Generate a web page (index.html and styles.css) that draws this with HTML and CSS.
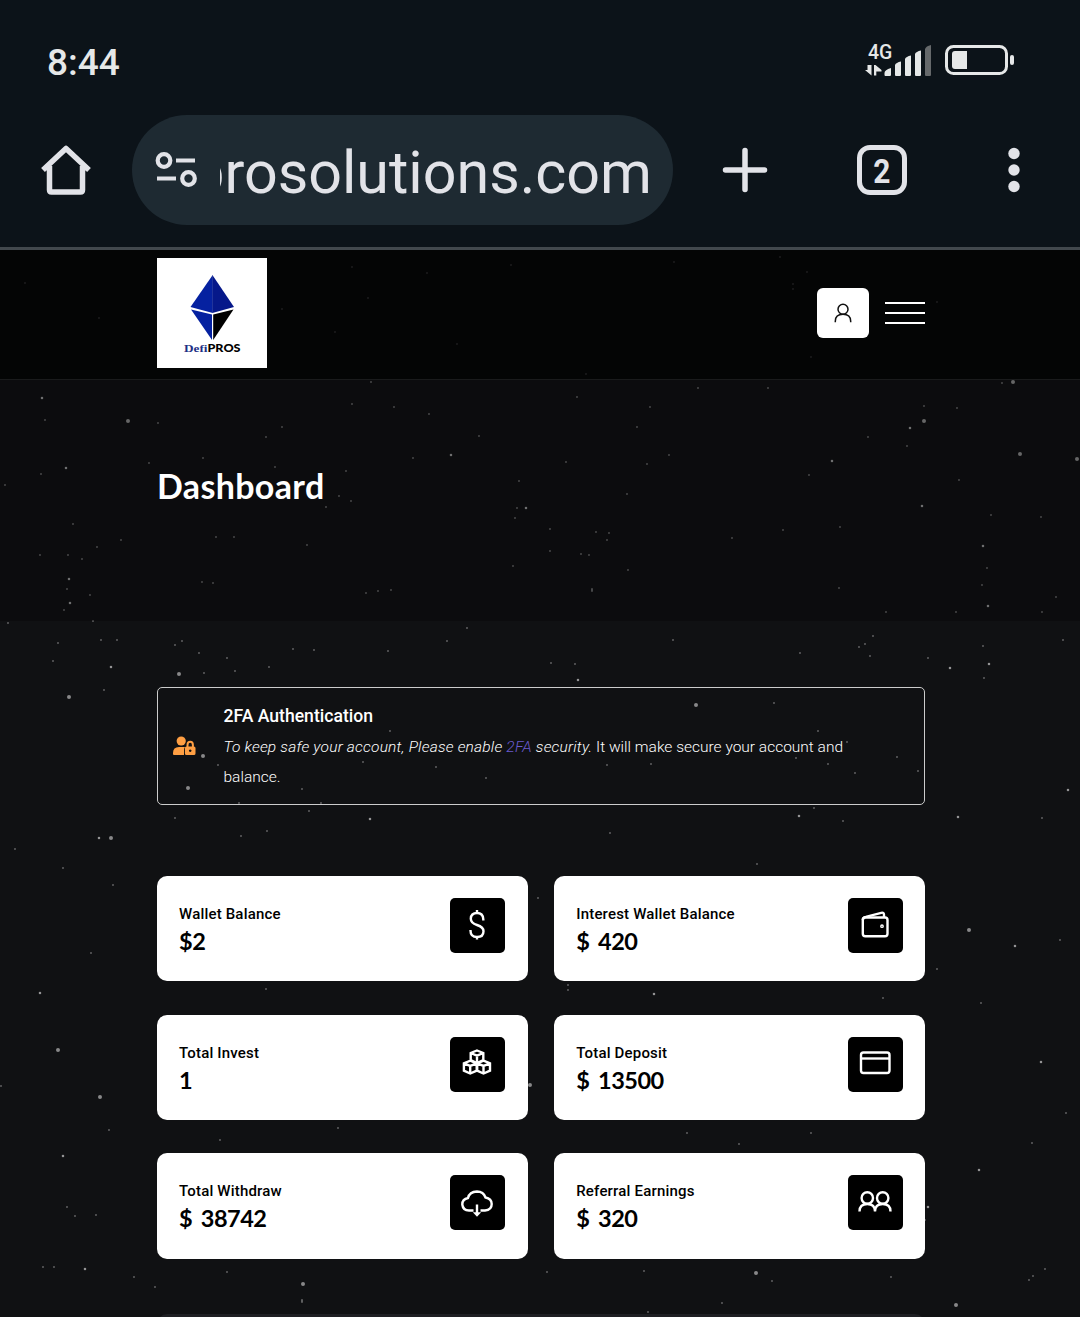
FILE: index.html
```html
<!DOCTYPE html>
<html lang="en">
<head>
<meta charset="utf-8">
<title>Dashboard</title>
<link rel="stylesheet" href="styles.css">
</head>
<body>
<div class="chrome">
  <div class="status">
    <span class="clock">8:44</span>
    <svg class="indicators" width="152" height="38" viewBox="0 0 152 38">
      <text x="5" y="18.500" class="net">4G</text>
      <path class="lit" d="M8.500 25v10.500L2 30h2.500v-5zM11 25v10.500h2.300v-4H18.500V30L12.500 25zM21.500 35v-2q0-3 6.500-5v7q0 1-1 1h-4.500q-1 0-1-1zM32 35V25q1-2.500 6-3.500V35q0 1-1 1h-4q-1 0-1-1zM42 35V19q1-2.500 6-3.500V35q0 1-1 1h-4q-1 0-1-1zM52 35V14q1-2.500 6-3.500V35q0 1-1 1h-4q-1 0-1-1z"/>
      <path class="dim" d="M62 35V9q1-3 6-4v30q0 1-1 1h-4q-1 0-1-1z"/>
      <rect x="83.500" y="6.500" width="60" height="27" rx="7" class="cell"/>
      <path class="lit" d="M92 11h12v18H92q-3 0-3-3V14q0-3 3-3z"/>
      <rect x="147" y="15" width="4" height="10" rx="2" class="lit"/>
    </svg>
  </div>
  <div class="toolbar">
    <svg class="home" width="52" height="52" viewBox="0 0 52 52"><path d="M3 26 26 4.500 49 26M9.500 22v24q0 2 2 2h29q2 0 2-2V22"/></svg>
    <div class="omnibox">
      <svg class="tune" width="42" height="36" viewBox="0 0 42 36"><circle cx="9" cy="8.500" r="6.300"/><circle cx="33.500" cy="26.500" r="6.300"/><path d="M21 8.500h19M2 26.500h19"/></svg>
      <div class="url"><span>prosolutions.com</span></div>
    </div>
    <svg class="plus" width="44" height="44" viewBox="0 0 44 44"><path d="M22 2.500v39M2.500 22h39"/></svg>
    <div class="tabs"><span>2</span></div>
    <svg class="more" width="12" height="46" viewBox="0 0 12 46"><circle cx="6" cy="6.500" r="5.700"/><circle cx="6" cy="23" r="5.700"/><circle cx="6" cy="39.500" r="5.700"/></svg>
  </div>
</div>
<div class="site">
  <svg class="stars" width="1080" height="1067" viewBox="0 250 1080 1067">
    <path class="s1" d="M45 420h0M158 423h0M371 382h0M352 404h0M394 407h0M429 414h0M282 427h0M266 437h0M479 436h0M413 458h0M203 458h0M149 463h0M41 474h0M5 485h0M275 467h0M346 471h0M519 481h0M339 496h0M351 501h0M326 507h0M517 508h0M515 518h0M73 524h0M216 537h0M234 537h0M121 540h0M307 545h0M97 547h0M40 555h0M68 555h0M82 559h0M513 566h0M67 589h0M202 582h0M213 583h0M90 595h0M64 610h0M366 593h0M378 591h0M391 590h0M93 621h0M8 623h0M467 628h0M101 640h0M117 640h0M58 643h0M182 641h0M175 645h0M199 653h0M227 658h0M293 649h0M314 650h0M388 651h0M447 641h0M53 661h0M204 673h0M235 671h0M269 667h0M698 388h0M768 388h0M577 397h0M650 407h0M637 427h0M669 455h0M647 464h0M566 462h0M627 494h0M550 529h0M550 551h0M596 532h0M609 533h0M607 540h0M581 554h0M589 555h0M628 570h0M592 589v2M1002 383h0M924 406h0M957 408h0M868 437h0M907 446h0M809 475h0M959 480h0M991 515h0M1041 517h0M840 527h0M783 530h0M732 538h0M987 568h0M982 585h0M839 588h0M1056 597h0M1042 612h0M956 612h0M886 612h0M673 640h0M873 636h0M865 644h0M859 647h0M870 656h0M800 653h0M928 658h0M983 646h0M1063 640h0M984 678h0M551 663h0M575 664h0M302 789h0M218 765h0M390 731h0M363 762h0M436 767h0M486 778h0M239 803h0M321 803h0M309 811h0M774 703h0M818 731h0M847 742h0M796 758h0M828 764h0M855 773h0M897 757h0M918 771h0M607 765h0M651 764h0M814 808h0M104 690h0M15 849h0M843 821h0M610 833h0M757 864h0M267 831h0M241 836h0M175 818h0M1042 818h0M1060 940h0M91 953h0M109 1130h0M1 1086h0M568 985h0M568 990h0M883 998h0M981 1003h0M1032 1143h0M1066 1113h0M302 1300v2M925 1220h0M547 1272h0M644 1271h0M772 1281h0M891 1277h0M722 1303h0M648 1312h0M43 1267h0M54 1267h0M134 1277h0M155 1287h0M227 1272h0M1033 1276h0M1045 1269h0M1029 1280h0M67 1207h0M75 1216h0M96 1215h0M266 989h0M338 1128h0M220 1140h0M739 1144h0M538 898h0M937 969h0M113 885h0M63 868h0M282 309h0M352 267h0M368 298h0M335 332h0M807 272h0M793 284h0M793 289h0M937 302h0M811 357h0M780 257h0M674 262h0M99 318h0M25 283h0M457 344h0M586 374h0M427 273h0M511 265h0M687 1133h0M811 1133h0"/>
    <path class="s2" d="M42 398h0M451 455h0M66 468h0M526 508h0M69 579h0M70 603h0M111 667h0M910 428h0M832 461h0M922 506h0M983 546h0M988 606h0M950 668h0M989 664h0M578 680h0M1068 790h0M370 819h0M99 838h0M799 816h0M958 817h0M1015 946h0M40 993h0M63 1156h0M654 994h0M1041 1062h0M979 1170h0M928 1207h0M85 1269h0"/>
    <path class="s3" d="M128 421h0M179 674h0M1013 382h0M924 421h0M1020 454h0M1077 459h0M203 756h0M188 788h0M696 705h0M69 697h0M111 838h0M969 930h0M58 1050h0M100 1097h0M530 1085h0M303 1284h0M756 1273h0M956 1305h0"/>
  </svg>
  <header class="header">
    <div class="logo">
      <svg width="110" height="110" viewBox="0 0 110 110">
        <path fill="#0521a0" d="M55.700 17v38L33.500 49z"/><path fill="#06188a" d="M55.400 17v38L77 49z"/>
        <path fill="#0521a0" d="M34 51.500 55 56.500V82z"/><path fill="#000" d="M76.500 51.500 56.200 56.500V82z"/>
        <text x="27" y="94" class="defi" textLength="23.500" lengthAdjust="spacingAndGlyphs">Defi</text>
        <text x="50.500" y="94" class="pros" textLength="33" lengthAdjust="spacingAndGlyphs">PROS</text>
      </svg>
    </div>
    <div class="actions">
      <div class="user"><svg width="20" height="20" viewBox="0 0 20 20"><circle cx="10" cy="6.200" r="5"/><path d="M2.300 19.200v-1q0-7 7.700-7t7.700 7v1"/></svg></div>
      <div class="burger"><i></i><i></i><i></i></div>
    </div>
  </header>
  <section class="hero"><h1>Dashboard</h1></section>
  <main class="main">
    <div class="alert">
      <svg class="lock" width="24" height="20" viewBox="0 0 24 20"><circle cx="8.200" cy="5" r="4.600"/><path d="M1 19q-1 0-1-1v-1q0-6 6-6h6q-1 1-1 3v5z"/><path fill-rule="evenodd" d="M13.500 10.500V9q0-4.200 3.700-4.200T20.900 9v1.500q1.600 0 1.600 1.600v5.300q0 1.600-1.600 1.600h-7.400q-1.600 0-1.600-1.600v-5.300q0-1.600 1.600-1.600zm2 0h3.400V9q0-2.200-1.700-2.200T15.500 9zm1.700 2.900a1.300 1.300 0 1 0 .01 0z"/></svg>
      <div class="copy">
        <h2>2FA Authentication</h2>
        <p><em>To keep safe your account, Please enable <a>2FA</a> security.</em> It will make secure your account and balance.</p>
      </div>
    </div>
    <div class="grid">
      <div class="card"><div><div class="label">Wallet Balance</div><div class="value">$2</div></div>
        <div class="icon"><svg width="36" height="36" viewBox="0 0 36 36"><path d="M24.300 13.500v-1.300Q24 6 18 6t-6.200 5.700c0 4 2.800 5.200 6.200 6.300 3.500 1.100 6.500 2.300 6.500 6.200Q24.500 30 18 30t-6.500-6.500V23M18 3v3M18 30v2.500"/></svg></div></div>
      <div class="card"><div><div class="label">Interest Wallet Balance</div><div class="value">$ 420</div></div>
        <div class="icon"><svg width="36" height="36" viewBox="0 0 36 36"><rect x="5.800" y="10.500" width="24.700" height="18.700" rx="2.500"/><path d="M5.800 13q0-2.500 3-3.200l15.500-4q2.700-.7 2.700 2v2.700"/><circle cx="25" cy="19.200" r=".7"/></svg></div></div>
      <div class="card"><div><div class="label">Total Invest</div><div class="value">1</div></div>
        <div class="icon"><svg width="36" height="36" viewBox="0 0 36 36"><path d="M18 5.500 24.300 8v7.200L18 18l-6.300-2.800V8zM11.700 8l6.300 2.700L24.300 8M18 10.700V18M11.200 15.700l6.500 2.600v7.400l-6.500 2.800-6.300-2.800v-7.400zM4.900 18.300l6.300 2.600 6.500-2.600M11.200 21v7.500M24.500 15.700l6.500 2.600v7.400l-6.500 2.800-6.300-2.800v-7.400zM18.200 18.300l6.300 2.600 6.500-2.600M24.500 21v7.500"/></svg></div></div>
      <div class="card"><div><div class="label">Total Deposit</div><div class="value">$ 13500</div></div>
        <div class="icon"><svg width="36" height="36" viewBox="0 0 36 36"><rect x="4" y="7.500" width="28.500" height="20.500" rx="2.500"/><path d="M4 13.500h28.500"/></svg></div></div>
      <div class="card"><div><div class="label">Total Withdraw</div><div class="value">$ 38742</div></div>
        <div class="icon"><svg width="36" height="36" viewBox="0 0 36 36"><path d="M14.500 26.500H10Q4 26.500 3.300 20.500 3.300 15 9 14q1.500-6.300 9-6.500 6.500 0 8.500 6 6 1 6.200 6.500 0 6-6.700 6.500h-4.500M18 20.500v9"/><path class="solid" d="M13.800 28.300h8.400L18 32.700z"/></svg></div></div>
      <div class="card"><div><div class="label">Referral Earnings</div><div class="value">$ 320</div></div>
        <div class="icon"><svg width="36" height="36" viewBox="0 0 36 36"><circle cx="10.300" cy="14" r="5.700"/><circle cx="25.700" cy="14" r="5.700"/><path d="M2.500 27.500q0-7.500 7.800-7.500 7.700 0 7.700 7.500 0-7.500 7.700-7.500 7.800 0 7.800 7.500"/></svg></div></div>
    </div>
    <div class="panel"></div>
  </main>
</div>
</body>
</html>
```

FILE: styles.css
```css
* { box-sizing: border-box; }
body { margin: 0; width: 1080px; height: 1317px; overflow: hidden; background: #101113; font-family: Roboto, sans-serif; color: #fff; }
svg { display: block; overflow: visible; }
h1, h2, p { margin: 0; }

.chrome { height: 250px; background: #0c1319; border-bottom: 3px solid #42484d; }
.status { height: 115px; padding: 39px 65px 0 47px; display: flex; justify-content: space-between; }
.clock { font-size: 37px; line-height: 48px; font-weight: 500; color: #e6e8e8; }
.indicators { margin-top: 1px; }
.net { font: 500 19.500px Roboto, sans-serif; fill: #e6e8e8; }
.lit { fill: #e6e8e8; }
.dim { fill: #66696b; }
.cell { fill: none; stroke: #e6e8e8; stroke-width: 3; }

.toolbar { height: 110px; display: flex; align-items: center; padding-left: 40px; color: #e2e3e8; }
.toolbar svg { fill: none; stroke: #e2e3e8; stroke-width: 5.5; flex: none; }
.toolbar .home { stroke-linejoin: round; }
.omnibox { margin-left: 40px; width: 541px; height: 110px; border-radius: 55px; background: #1e2a32; display: flex; align-items: center; padding-left: 23px; }
.toolbar .tune { stroke-width: 4.200; }
.url { margin-left: 23px; width: 432px; height: 80px; overflow: hidden; display: flex; justify-content: flex-end; font-size: 59.200px; line-height: 86px; white-space: nowrap; }
.toolbar .plus { margin-left: 50px; stroke-linecap: round; }
.tabs { margin-left: 90px; width: 50px; height: 50px; border: 5.500px solid #e2e3e8; border-radius: 13px; font: 700 34px/42px Roboto, sans-serif; text-align: center; }
.tabs span { display: inline-block; transform: scaleX(.88); }
.toolbar .more { margin-left: 101px; fill: #e2e3e8; stroke: none; }

.site { position: relative; height: 1067px; }
.stars { position: absolute; top: 0; left: 0; z-index: -1; fill: none; stroke-linecap: round; stroke: #fff; }
.s1 { stroke-width: 2; opacity: .33; }
.s2 { stroke-width: 2.600; opacity: .55; }
.s3 { stroke-width: 4; opacity: .5; }

.header { height: 130px; background: rgba(0, 0, 0, .7); border-bottom: 1px solid #1a1b1c; padding: 8px 155px 0 157px; display: flex; justify-content: space-between; }
.logo { width: 110px; height: 110px; background: #fff; }
.defi { font: bold 11px "Liberation Serif", serif; fill: #1d2f86; }
.pros { font: 900 12px Lato, sans-serif; fill: #000; }
.actions { display: flex; gap: 16px; padding-top: 30px; }
.user { width: 52px; height: 50px; border-radius: 6px; background: #fff; display: flex; align-items: center; justify-content: center; }
.user svg { fill: none; stroke: #111; stroke-width: 1.500; }
.burger { width: 40px; height: 50px; display: flex; flex-direction: column; justify-content: center; gap: 8px; }
.burger i { height: 2px; background: #fff; }

.hero { height: 241px; background: rgba(0, 0, 0, .25); padding: 85px 0 0 157px; }
.hero h1 { font: 700 34px/42px Lato, sans-serif; letter-spacing: .35px; }

.main { padding: 66px 155px 0 157px; }
.alert { height: 118px; border: 1px solid #ccc; border-radius: 5px; display: flex; padding: 0 50px 0 15px; }
.lock { margin-top: 48px; flex: none; fill: #ff9f43; }
.copy { margin-left: 26.500px; padding-top: 15px; }
.copy h2 { font-size: 17.600px; line-height: 26px; font-weight: 500; }
.copy p { margin-top: 3px; font-size: 15.500px; line-height: 30px; font-weight: 300; color: #fff; }
.copy em { letter-spacing: .2px; }
.copy a { color: #6a5acd; }
.grid { margin-top: 71px; display: grid; grid-template-columns: 1fr 1fr; gap: 33.300px 26.500px; }
.card { height: 105.400px; border-radius: 10px; background: #fff; color: #000; padding: 22px 22.500px 22px 22px; display: flex; justify-content: space-between; }
.label { margin-top: 5px; font-size: 15px; line-height: 22px; letter-spacing: .18px; font-weight: 500; }
.value { margin-top: 1px; font: 700 23.500px/30px Lato, sans-serif; letter-spacing: -.5px; word-spacing: 3.500px; }
.icon { width: 55px; height: 55px; border-radius: 5px; background: #000; display: flex; align-items: center; justify-content: center; }
.icon svg { fill: none; stroke: #fff; stroke-width: 2.400; margin: -2px 1px 0 0; }
.icon .solid { fill: #fff; stroke: none; }
.panel { margin-top: 55px; height: 40px; border-radius: 10px 10px 0 0; background: #1e1f23; }
```
